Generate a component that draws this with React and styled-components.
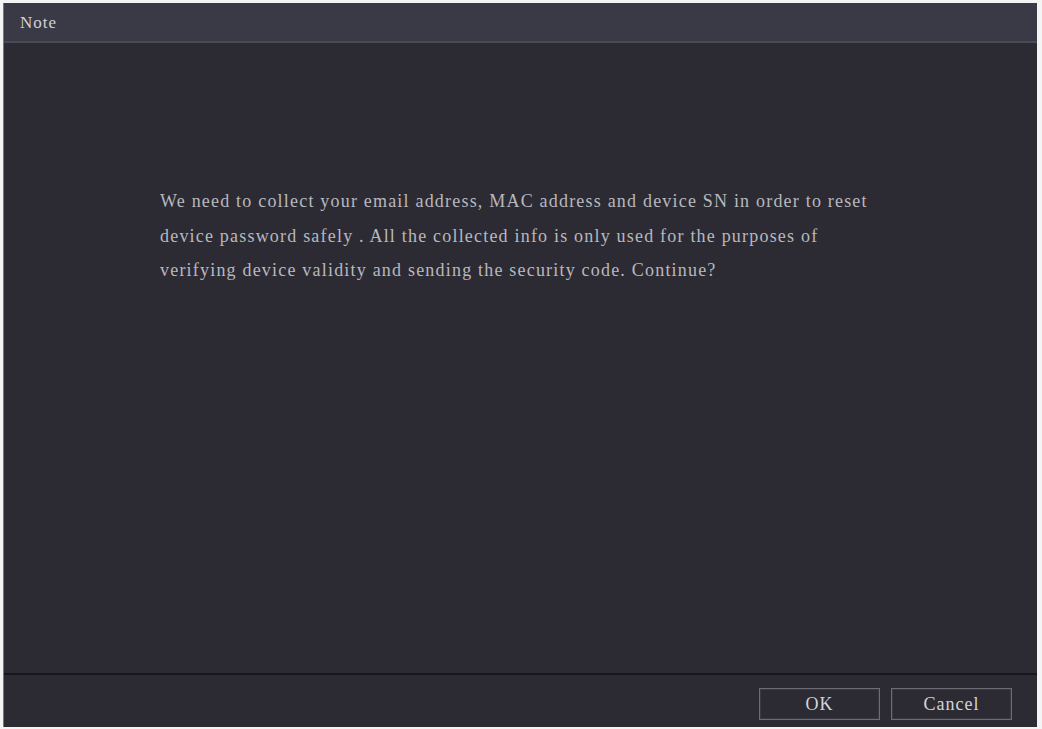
import React from 'react'
import styled, { createGlobalStyle } from 'styled-components'

const GlobalStyle = createGlobalStyle`
    html, body {
        margin: 0;
        padding: 0;
        background: #ffffff;
    }
`;

function App() {
    return (
        <>
            <GlobalStyle />
            <Page>
                <Dialog>
                    <TitleBar>Note</TitleBar>
                    <Body>
                        <Message>
                            We need to collect your email address, MAC address and device SN in order to reset<br />
                            device password safely . All the collected info is only used for the purposes of<br />
                            verifying device validity and sending the security code. Continue?
                        </Message>
                    </Body>
                    <Footer>
                        <Button>OK</Button>
                        <Button>Cancel</Button>
                    </Footer>
                </Dialog>
            </Page>
        </>
    )
}

export default App

const Page = styled.div`
    width: 1042px;
    height: 729px;
    padding: 3px 5px 2px 3px;
    box-sizing: border-box;
    background: #f4f4f4;
`;

const Dialog = styled.div`
    height: 100%;
    display: flex;
    flex-direction: column;
    background-color: #2c2b34;
    border-left: 1px solid #77767d;
    font-family: "Liberation Serif", "Times New Roman", serif;
`;

const TitleBar = styled.div`
    height: 40px;
    display: flex;
    align-items: center;
    padding: 1px 0 0 16px;
    box-sizing: border-box;
    background-color: #3a3946;
    border-bottom: 2px solid #4a4955;
    color: #d2d2d6;
    font-size: 17px;
    letter-spacing: 1px;
`;

const Body = styled.div`
    flex: 1;
    padding: 141px 0 0 156px;
`;

const Message = styled.p`
    margin: 0;
    color: #b8b8be;
    font-size: 18px;
    line-height: 34.5px;
    letter-spacing: 1.2px;
`;

const Footer = styled.div`
    height: 54px;
    display: flex;
    align-items: flex-start;
    justify-content: flex-end;
    gap: 11px;
    padding: 13px 25px 0 0;
    box-sizing: border-box;
    border-top: 2px solid #17161c;
`;

const Button = styled.div`
    width: 121px;
    height: 32px;
    box-sizing: border-box;
    display: flex;
    align-items: center;
    justify-content: center;
    border: 1px solid #6d6c74;
    box-shadow: inset 0 0 0 1px #3a3942;
    color: #d4d4d8;
    font-size: 18px;
    letter-spacing: 1px;
`;
